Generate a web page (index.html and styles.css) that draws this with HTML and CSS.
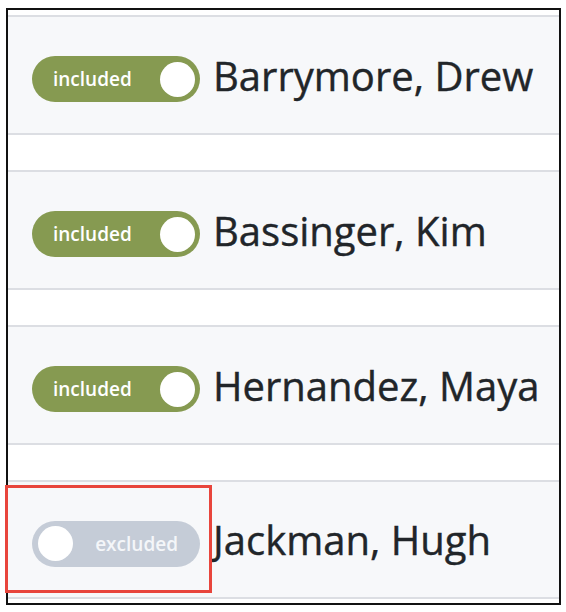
FILE: index.html
```html
<!DOCTYPE html>
<html lang="en">

<head>
    <meta charset="UTF-8">
    <meta name="viewport" content="width=device-width, initial-scale=1.0">
    <title>Cast List</title>
    <link rel="stylesheet" href="styles.css">
</head>

<body>
    <div class="frame">
        <ul class="cast-list">
            <li class="cast-row">
                <span class="toggle on"><span class="toggle-label">included</span><span class="knob"></span></span>
                <span class="name">Barrymore, Drew</span>
            </li>
            <li class="cast-row">
                <span class="toggle on"><span class="toggle-label">included</span><span class="knob"></span></span>
                <span class="name">Bassinger, Kim</span>
            </li>
            <li class="cast-row">
                <span class="toggle on"><span class="toggle-label">included</span><span class="knob"></span></span>
                <span class="name">Hernandez, Maya</span>
            </li>
            <li class="cast-row">
                <span class="toggle off"><span class="knob"></span><span class="toggle-label">excluded</span></span>
                <span class="name">Jackman, Hugh</span>
                <!-- annotation box around the switched-off toggle -->
                <span class="highlight"></span>
            </li>
        </ul>
    </div>
</body>

</html>
```

FILE: styles.css
```css
body {
    margin: 0;
    background: #fff;
    font-family: "Open Sans", "Noto Sans", sans-serif;
}

.frame {
    margin: 8px 0 0 6px;
    width: 555px;
    height: 597px;
    box-sizing: border-box;
    border: 2px solid #111;
    position: relative;
}

.cast-list {
    list-style: none;
    margin: 0;
    padding: 5px 0 0 0;
}

.cast-row {
    position: relative;
    display: flex;
    align-items: center;
    height: 120px;
    box-sizing: border-box;
    margin-bottom: 35px;
    padding-left: 24px;
    background: #f7f8fa;
    border-top: 2px solid #dcdee3;
    border-bottom: 2px solid #dcdee3;
}

.cast-row:last-child {
    height: 119px;
}

.toggle {
    display: flex;
    align-items: center;
    justify-content: space-between;
    width: 168px;
    height: 46px;
    margin-top: 8px;
    box-sizing: border-box;
    padding: 0 5px 0 21px;
    border-radius: 23px;
    flex-shrink: 0;
}

.toggle.on {
    background: #869a51;
}

.toggle.off {
    background: #c5ccd7;
    padding: 0 22px 0 6px;
}

.toggle-label {
    color: #fff;
    font-size: 19px;
    font-weight: 600;
}

.toggle.off .toggle-label {
    color: #f4f6f9;
}

.knob {
    width: 35px;
    height: 35px;
    border-radius: 50%;
    background: #fff;
}

.name {
    margin-left: 13px;
    font-size: 40px;
    color: #212529;
    white-space: nowrap;
    -webkit-text-stroke: 0.4px #212529;
}

.highlight {
    position: absolute;
    left: -3px;
    top: 3px;
    width: 207px;
    height: 108px;
    box-sizing: border-box;
    border: 3px solid #e8453c;
}
```
